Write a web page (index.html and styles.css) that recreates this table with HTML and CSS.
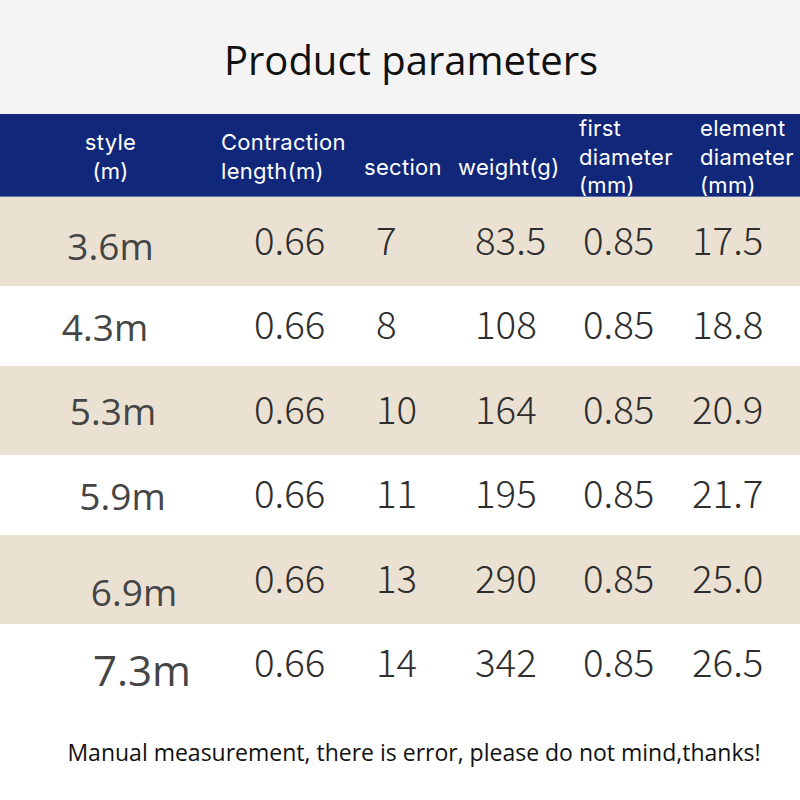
FILE: index.html
```html
<!DOCTYPE html>
<html>
<head>
<meta charset="utf-8">
<link rel="stylesheet" href="styles.css">
</head>
<body>
<div class="page">
  <div class="title-bar"><h1 class="title">Product parameters</h1></div>
  <div class="head">
    <div class="h h-style">style<br>(m)</div>
    <div class="h h-len">Contraction<br>length(m)</div>
    <div class="h h-sec">section</div>
    <div class="h h-wt">weight(g)</div>
    <div class="h h-first">first<br>diameter<br>(mm)</div>
    <div class="h h-el">element<br>diameter<br>(mm)</div>
  </div>
  <div class="row tan">
    <div class="style s1">3.6m</div><div class="v">0.66</div><div class="v">7</div><div class="v">83.5</div><div class="v">0.85</div><div class="v">17.5</div>
  </div>
  <div class="row plain">
    <div class="style s2">4.3m</div><div class="v">0.66</div><div class="v">8</div><div class="v">108</div><div class="v">0.85</div><div class="v">18.8</div>
  </div>
  <div class="row tan">
    <div class="style s3">5.3m</div><div class="v">0.66</div><div class="v">10</div><div class="v">164</div><div class="v">0.85</div><div class="v">20.9</div>
  </div>
  <div class="row plain">
    <div class="style s4">5.9m</div><div class="v">0.66</div><div class="v">11</div><div class="v">195</div><div class="v">0.85</div><div class="v">21.7</div>
  </div>
  <div class="row tan">
    <div class="style s5">6.9m</div><div class="v">0.66</div><div class="v">13</div><div class="v">290</div><div class="v">0.85</div><div class="v">25.0</div>
  </div>
  <div class="row plain">
    <div class="style s6">7.3m</div><div class="v">0.66</div><div class="v">14</div><div class="v">342</div><div class="v">0.85</div><div class="v">26.5</div>
  </div>
  <p class="note">Manual measurement, there is error, please do not mind,thanks!</p>
</div>
</body>
</html>
```

FILE: styles.css
```css
* { box-sizing: border-box; }
html, body { margin: 0; padding: 0; background: #ffffff; }
.page { width: 800px; height: 800px; overflow: hidden; background: #ffffff; font-family: "Open Sans", "Noto Sans", sans-serif; }

.title-bar { height: 114px; background: #f4f4f4; display: flex; align-items: center; justify-content: center; padding-left: 22px; }
.title { margin: 0; padding-top: 4px; font-weight: 400; font-size: 40px; color: #111111; letter-spacing: 0; }

.head { height: 83px; background: #10277a; border-bottom: 1px solid #5a6fa8; display: grid; grid-template-columns: 221px 143px 94px 121px 121px 1fr; align-items: center; color: #ffffff; font-family: Inter, "Open Sans", sans-serif; font-size: 22px; line-height: 28.5px; white-space: nowrap; letter-spacing: 0.3px; }
.h-style { text-align: center; }
.h-sec, .h-wt { margin-top: 21px; }

.row { display: grid; grid-template-columns: 254px 122px 99px 108px 109px 1fr; align-items: center; }
.tan { height: 89px; background: #ebe1d3; }
.plain { height: 80px; background: #ffffff; }

.style { font-family: "Open Sans", sans-serif; font-size: 37px; color: #454545; text-align: center; }
.s1 { padding-right: 33px; margin-top: 8px; }
.s2 { padding-right: 44px; }
.s3 { padding-right: 28px; }
.s4 { padding-right: 9px; }
.s5 { padding-left: 14px; margin-top: 24px; }
.s6 { padding-left: 30px; margin-top: 10px; font-size: 42px; }

.v { font-family: "Noto Sans CJK SC", "Noto Sans", sans-serif; font-weight: 300; font-size: 38.5px; color: #2e2e2e; margin-bottom: 8px; }

.note { margin: 32px 0 0; padding-left: 28px; text-align: center; font-size: 23px; color: #111111; }
```
